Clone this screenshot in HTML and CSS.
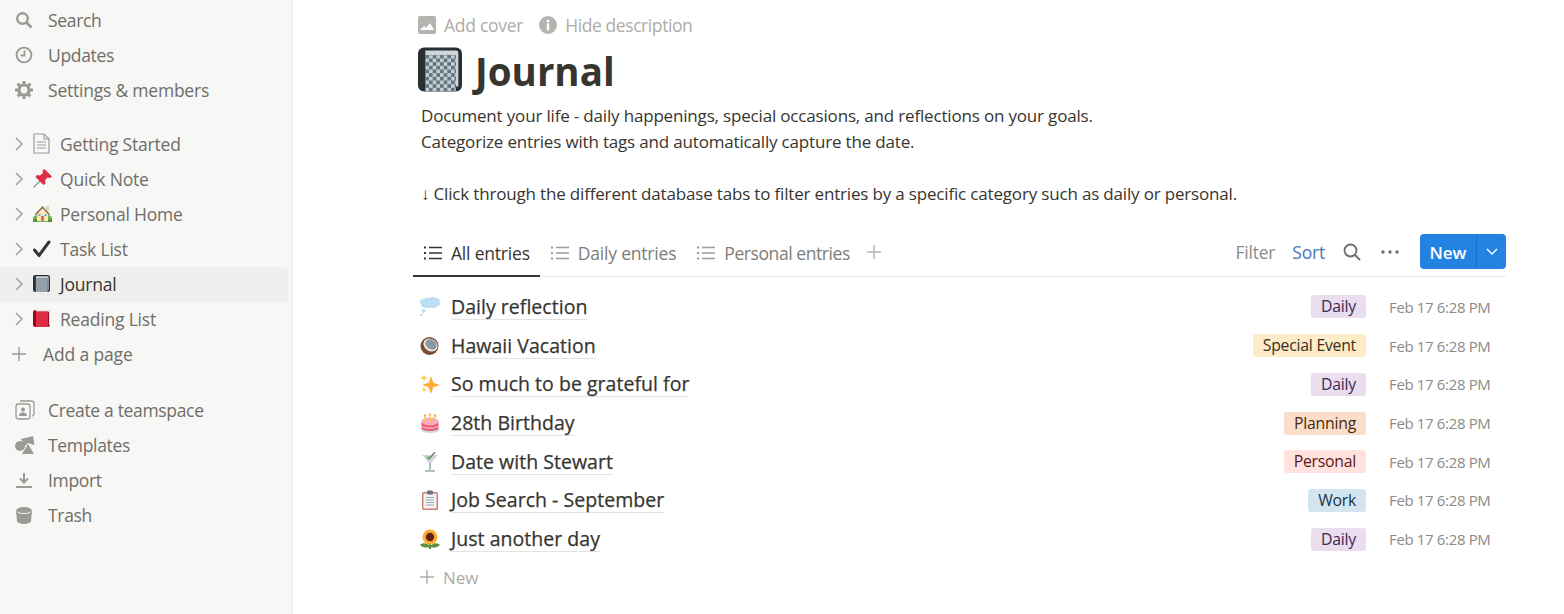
FILE: index.html
```html
<!DOCTYPE html>
<html lang="en">
<head>
<meta charset="utf-8">
<title>Journal</title>
<link rel="stylesheet" href="styles.css">
</head>
<body>
<svg class="defs" width="0" height="0" aria-hidden="true">
  <defs>
    <pattern id="chk" width="6" height="6" patternUnits="userSpaceOnUse">
      <rect width="6" height="6" fill="#c3ccd2"/>
      <rect width="3" height="3" fill="#66757f"/>
      <rect x="3" y="3" width="3" height="3" fill="#66757f"/>
    </pattern>
    <symbol id="chev" viewBox="0 0 10 16"><path d="M2 2l6 6-6 6" fill="none" stroke="#a5a4a0" stroke-width="1.6"/></symbol>
    <symbol id="plus" viewBox="0 0 16 16"><path d="M8 1v14M1 8h14" fill="none" stroke="currentColor" stroke-width="1.4"/></symbol>
    <symbol id="list" viewBox="0 0 18 14"><path d="M5 1.5h13M5 7h13M5 12.5h13" stroke="currentColor" stroke-width="1.5" fill="none"/><path d="M0 .5h2v2H0zM0 6h2v2H0zM0 11.5h2v2H0z" fill="currentColor"/></symbol>
    <symbol id="book" viewBox="0 0 36 36">
      <path d="M5 0h26a5 5 0 0 1 5 5v26a5 5 0 0 1-5 5H5a5 5 0 0 1-5-5V5a5 5 0 0 1 5-5z" fill="#292f33"/>
      <path d="M6 2.500h25a2 2 0 0 1 2 2V32h-2V6.500H6z" fill="#ccd6dd"/>
      <rect x="6" y="6.500" width="25" height="29.500" fill="url(#chk)"/>
    </symbol>
  </defs>
</svg>
<div class="app">
  <aside class="sidebar">
    <nav class="group">
      <a class="row"><span class="ico"><svg width="18" height="18" viewBox="0 0 18 18"><circle cx="7.500" cy="7.500" r="5.300" fill="none" stroke="#9b9a97" stroke-width="2.400"/><path d="M11.500 11.500l5 5" stroke="#9b9a97" stroke-width="2.800"/></svg></span>Search</a>
      <a class="row"><span class="ico"><svg width="18" height="18" viewBox="0 0 18 18"><circle cx="9" cy="9" r="7.400" fill="none" stroke="#9b9a97" stroke-width="1.900"/><path d="M9.500 4.500v5H5.500" fill="none" stroke="#9b9a97" stroke-width="1.800"/></svg></span>Updates</a>
      <a class="row"><span class="ico"><svg width="18" height="18" viewBox="0 0 18 18"><circle cx="9" cy="9" r="5" fill="none" stroke="#9b9a97" stroke-width="3.200"/><path d="M9 0v18M0 9h18M2.600 2.600l12.800 12.800M15.400 2.600L2.600 15.400" stroke="#9b9a97" stroke-width="3" stroke-dasharray="3 12 3"/></svg></span><span class="wide">Settings &amp; members</span></a>
    </nav>
    <nav class="group pages">
      <a class="row page"><svg class="chev"><use href="#chev"/></svg><span class="pico"><svg width="17" height="21" viewBox="0 0 17 21"><path d="M1 1h10l5 5v14H1z" fill="none" stroke="#9b9a97" stroke-width="1.200"/><path d="M11 1v5h5M4 9h9M4 12h9M4 15h9" fill="none" stroke="#9b9a97" stroke-width="1.100"/></svg></span>Getting Started</a>
      <a class="row page"><svg class="chev"><use href="#chev"/></svg><span class="pico"><svg width="19" height="19" viewBox="0 0 19 19"><path d="M0.500 18.500l6.500-6.500" stroke="#8899a6" stroke-width="1.300"/><path d="M11.500 0l7.500 7.500-2 1.500-2.500-.5-2.500 3 .5 3-2 1.500-8-8 1.500-2 3 .5 3-2.500-.5-2.500z" fill="#dd2e44"/></svg></span>Quick Note</a>
      <a class="row page"><svg class="chev"><use href="#chev"/></svg><span class="pico"><svg width="19" height="19" viewBox="0 0 19 19"><path d="M0 14a4 4 0 0 1 5-3h9a4 4 0 0 1 5 3v4H0z" fill="#77b255"/><rect x="4" y="8" width="11" height="9" fill="#ffe8b6"/><path d="M2 10l7.500-8 7.500 8-1.200 1-6.300-6.500-6.300 6.500z" fill="#a0674b"/><path d="M11 5l3-3h2l0 5z" fill="#c6e5b3"/><rect x="8.200" y="12" width="2.600" height="5" fill="#c1694f"/><rect x="5.500" y="10" width="2" height="2" fill="#55acee"/><rect x="11.500" y="10" width="2" height="2" fill="#55acee"/><path d="M0 15h4v3H0zM15 15h4v3h-4z" fill="#5c913b"/></svg></span>Personal Home</a>
      <a class="row page"><svg class="chev"><use href="#chev"/></svg><span class="pico"><svg width="18" height="18" viewBox="0 0 18 18"><path d="M1.500 10l4.500 5.500L16 2" fill="none" stroke="#31373d" stroke-width="3" stroke-linecap="round" stroke-linejoin="round"/></svg></span>Task List</a>
      <a class="row page active"><svg class="chev"><use href="#chev"/></svg><span class="pico"><svg width="17" height="17"><use href="#book"/></svg></span>Journal</a>
      <a class="row page"><svg class="chev"><use href="#chev"/></svg><span class="pico"><svg width="17" height="17" viewBox="0 0 17 17"><rect width="17" height="17" rx="2.500" fill="#a0041e"/><path d="M3 0h12a2 2 0 0 1 2 2v13h-1V3a1.500 1.500 0 0 0-1.500-1.500H3z" fill="#ffd7dc"/><path d="M3 2h11a1 1 0 0 1 1 1v14H3z" fill="#dd2e44"/></svg></span>Reading List</a>
      <a class="row add"><svg class="addico"><use href="#plus"/></svg>Add a page</a>
    </nav>
    <nav class="group tools">
      <a class="row"><span class="ico"><svg width="20" height="20" viewBox="0 0 20 20"><rect x="1" y="4" width="14" height="15" rx="2.500" fill="none" stroke="#9b9a97" stroke-width="1.300"/><path d="M5 1h11.500A2.500 2.500 0 0 1 19 3.500V14a2.500 2.500 0 0 1-2 2" fill="none" stroke="#9b9a97" stroke-width="1.300"/><circle cx="8" cy="9.500" r="2" fill="#9b9a97"/><path d="M4 16c0-5 8-5 8 0z" fill="#9b9a97"/></svg></span>Create a teamspace</a>
      <a class="row"><span class="ico"><svg width="20" height="18" viewBox="0 0 20 18"><circle cx="5" cy="10" r="5" fill="#9b9a97"/><path d="M6 3l12-3 1.500 9-6.500-2-3 3z" fill="#9b9a97"/><path d="M13 8l6 10H7z" fill="#9b9a97"/></svg></span>Templates</a>
      <a class="row"><span class="ico"><svg width="18" height="18" viewBox="0 0 18 18"><path d="M9 2v9M5 7.500l4 4 4-4" fill="none" stroke="#9b9a97" stroke-width="2"/><path d="M1 16h16" stroke="#9b9a97" stroke-width="2"/></svg></span>Import</a>
      <a class="row"><span class="ico"><svg width="18" height="18" viewBox="0 0 18 18"><path d="M1 5a8 4 0 0 1 16 0l-1 10a7 3 0 0 1-14 0z" fill="#9b9a97"/><path d="M2.500 5.500a6.500 2 0 0 0 13 0" fill="none" stroke="#f7f7f5" stroke-width="1"/></svg></span>Trash</a>
    </nav>
  </aside>
  <main class="main">
    <div class="head">
      <div class="actions">
        <span class="action"><svg width="18" height="18" viewBox="0 0 18 18"><path d="M2 0h14a2 2 0 0 1 2 2v14a2 2 0 0 1-2 2H2a2 2 0 0 1-2-2V2a2 2 0 0 1 2-2z" fill="#b5b4b1"/><path d="M2 14l4-4 2 2 4-5 4 7z" fill="#fff"/></svg>Add cover</span>
        <span class="action tight"><svg width="18" height="18" viewBox="0 0 18 18"><circle cx="9" cy="9" r="9" fill="#b5b4b1"/><rect x="7.800" y="7.500" width="2.400" height="7" fill="#fff"/><circle cx="9" cy="5" r="1.500" fill="#fff"/></svg>Hide description</span>
      </div>
      <h1 class="title"><svg width="44" height="45"><use href="#book"/></svg>Journal</h1>
      <div class="desc">
        <p>Document your life - daily happenings, special occasions, and reflections on your goals.</p>
        <p>Categorize entries with tags and automatically capture the date.</p>
        <p>&nbsp;</p>
        <p>↓ Click through the different database tabs to filter entries by a specific category such as daily or personal.</p>
      </div>
    </div>
    <div class="toolbar">
      <div class="tabs">
        <a class="tab on"><svg width="18" height="14"><use href="#list"/></svg>All entries</a>
        <a class="tab"><svg width="18" height="14"><use href="#list"/></svg>Daily entries</a>
        <a class="tab tight"><svg width="18" height="14"><use href="#list"/></svg>Personal entries</a>
        <svg class="tabadd" width="16" height="16"><use href="#plus"/></svg>
      </div>
      <div class="tools-right">
        <span class="tool">Filter</span>
        <span class="tool blue">Sort</span>
        <svg class="searchico" width="18" height="18" viewBox="0 0 18 18"><circle cx="7.500" cy="7.500" r="6" fill="none" stroke="#6f6e69" stroke-width="1.800"/><path d="M12 12l5 5" stroke="#6f6e69" stroke-width="2"/></svg>
        <svg class="dots" width="18" height="4" viewBox="0 0 18 4"><circle cx="2" cy="2" r="1.700" fill="#6f6e69"/><circle cx="9" cy="2" r="1.700" fill="#6f6e69"/><circle cx="16" cy="2" r="1.700" fill="#6f6e69"/></svg>
        <div class="newbtn"><span class="newlabel">New</span><span class="newarrow"><svg width="12" height="7" viewBox="0 0 12 7"><path d="M1 1l5 5 5-5" fill="none" stroke="#fff" stroke-width="1.400"/></svg></span></div>
      </div>
    </div>
    <ul class="entries">
      <li class="entry"><svg class="emoji" viewBox="0 0 20 20"><path d="M4 2.500a4 2.500 0 0 1 6-1.500 4 2.500 0 0 1 6 0 3 3 0 0 1 3.500 4 3 3 0 0 1-2.500 4.500 4 2.500 0 0 1-6 1 5 2.500 0 0 1-6 0 4 3 0 0 1-4-3.500 3 3 0 0 1 3-5z" fill="#bbddf5"/><circle cx="3.500" cy="14" r="2" fill="#bbddf5"/><circle cx="1.500" cy="18" r="1.200" fill="#bbddf5"/></svg><span class="name">Daily reflection</span><span class="tag purple">Daily</span><span class="date">Feb 17 6:28 PM</span></li>
      <li class="entry"><svg class="emoji" viewBox="0 0 20 20"><circle cx="9.500" cy="10" r="9" fill="#7c4a2d"/><ellipse cx="10.500" cy="9" rx="7.500" ry="6" transform="rotate(35 10.500 9)" fill="#e8eaec"/><ellipse cx="11" cy="8.500" rx="6" ry="4.700" transform="rotate(35 11 8.500)" fill="#8899a6"/></svg><span class="name">Hawaii Vacation</span><span class="tag yellow">Special Event</span><span class="date">Feb 17 6:28 PM</span></li>
      <li class="entry"><svg class="emoji" viewBox="0 0 20 20"><path d="M11 2l2.300 6.700L20 11l-6.700 2.300L11 20l-2.300-6.700L2 11l6.700-2.300z" fill="#ffac33"/><path d="M4 0l1 2.800L7.800 4 5 5 4 8 3 5 .2 4 3 2.800z" fill="#ffcc4d"/><path d="M4 13l.8 2 2 .8-2 .8L4 19l-.8-2.400-2-.8 2-.8z" fill="#ffcc4d"/></svg><span class="name">So much to be grateful for</span><span class="tag purple">Daily</span><span class="date">Feb 17 6:28 PM</span></li>
      <li class="entry"><svg class="emoji" viewBox="0 0 20 20"><ellipse cx="10" cy="16.500" rx="9.500" ry="3.500" fill="#ccd6dd"/><path d="M1.500 9h17v6a8.500 3 0 0 1-17 0z" fill="#ea596e"/><path d="M1.500 11.500a8.500 3 0 0 0 17 0v1.500a8.500 3 0 0 1-17 0z" fill="#f4abba"/><ellipse cx="10" cy="8.500" rx="8.500" ry="4" fill="#f4abba"/><path d="M5 3.500v5M10 2.500v6M15 3.500v5" stroke="#ffcc4d" stroke-width="1.500"/><path d="M5 .5l1.200 3H3.800zM10 0l1.200 2.500H8.800zM15 .5l1.200 3h-2.400z" fill="#f4900c"/></svg><span class="name">28th Birthday</span><span class="tag orange">Planning</span><span class="date">Feb 17 6:28 PM</span></li>
      <li class="entry"><svg class="emoji" viewBox="0 0 20 20"><path d="M2 3h16l-8 9z" fill="#ccd6dd"/><path d="M10 11v7" stroke="#99aab5" stroke-width="1.500"/><path d="M5 19h10" stroke="#99aab5" stroke-width="1.500"/><path d="M9 7l6-7" stroke="#66757f" stroke-width="1.300"/><circle cx="8.500" cy="6" r="1.800" fill="#77b255"/></svg><span class="name">Date with Stewart</span><span class="tag red">Personal</span><span class="date">Feb 17 6:28 PM</span></li>
      <li class="entry"><svg class="emoji" viewBox="0 0 20 20"><rect x="2" y="2" width="16" height="18" rx="1.500" fill="#d0806a"/><rect x="3.500" y="3.500" width="13" height="15" fill="#f1f3f4"/><rect x="7" y="0.500" width="6" height="4" rx="1" fill="#66757f"/><path d="M6 7.500h8M6 10h8M6 12.500h8M6 15h8" stroke="#99aab5" stroke-width="1.100"/></svg><span class="name">Job Search - September</span><span class="tag blue-tag">Work</span><span class="date">Feb 17 6:28 PM</span></li>
      <li class="entry"><svg class="emoji" viewBox="0 0 20 20"><path d="M0 16c3-3 7-2 10 1 3-3 7-4 10-1-3 3-7 3-10 2-3 1-7 1-10-2z" fill="#5c913b"/><path d="M9 14h2v6H9z" fill="#5c913b"/><circle cx="10" cy="8" r="7.500" fill="#ffac33"/><circle cx="10" cy="8" r="4.200" fill="#662113"/></svg><span class="name">Just another day</span><span class="tag purple">Daily</span><span class="date">Feb 17 6:28 PM</span></li>
    </ul>
    <div class="newrow"><svg width="16" height="16"><use href="#plus"/></svg>New</div>
  </main>
</div>
</body>
</html>
```

FILE: styles.css
```css
* { box-sizing: border-box; }
html, body { margin: 0; height: 100%; overflow: hidden; }
body { font-family: "Open Sans", "Noto Sans", sans-serif; color: #37352f; background: #fff; }
.defs { position: absolute; }
.app { display: flex; height: 614px; }

.sidebar { width: 293px; flex: none; background: #f7f7f5; border-right: 1px solid #efefed; padding: 3px 4px 0 0; font-size: 17.5px; color: #6f6e69; }
.group { display: flex; flex-direction: column; }
.pages { margin-top: 19px; }
.tools { margin-top: 21px; }
.row { display: flex; align-items: center; height: 35px; padding: 0 0 2px 15px; border-radius: 0 4px 4px 0; white-space: nowrap; letter-spacing: -0.33px; }
.wide { letter-spacing: -0.22px; }
.ico { width: 33px; flex: none; display: flex; align-items: center; }
.page { padding-left: 14px; letter-spacing: -0.2px; }
.chev { width: 10px; height: 16px; margin-right: 9px; flex: none; }
.pico { width: 27px; flex: none; display: flex; align-items: center; }
.active { background: #efefed; color: #37352f; }
.add { padding-left: 11px; letter-spacing: -0.15px; }
.addico { width: 16px; height: 16px; margin-right: 16px; color: #9b9a97; }

.main { flex: 1; padding: 0 58px 0 120px; }
.head { padding-left: 5px; }
.actions { display: flex; gap: 16px; height: 49px; padding-top: 13px; font-size: 17.5px; color: #aeaca8; }
.action { display: flex; align-items: center; gap: 8px; height: 24px; white-space: nowrap; letter-spacing: -0.27px; }
.title { display: flex; align-items: center; gap: 13px; margin: 0; height: 44px; font-size: 38.5px; font-weight: 700; line-height: 44px; color: #37352f; }
.title svg { margin-bottom: 4px; }
.desc { padding: 10px 0 0 3px; font-size: 17px; line-height: 26px; color: #37352f; letter-spacing: -0.175px; }
.desc p { margin: 0; white-space: nowrap; }

.toolbar { display: flex; justify-content: space-between; align-items: stretch; height: 44px; margin-top: 26px; border-bottom: 1px solid #e9e9e7; }
.tabs { display: flex; align-items: stretch; }
.tab { display: flex; align-items: center; gap: 9px; padding: 0 10px 3px 11px; font-size: 17.5px; color: #7d7c78; letter-spacing: -0.2px; white-space: nowrap; margin-bottom: -1px; border-bottom: 2px solid transparent; }
.tight { letter-spacing: -0.42px; }
.tab svg { color: #9b9a97; }
.on { color: #37352f; border-bottom-color: #37352f; }
.on svg { color: #37352f; }
.tabadd { color: #b5b4b1; align-self: center; margin: 0 0 6px 6px; }
.tools-right { display: flex; align-items: center; padding-bottom: 6px; }
.tool { font-size: 17.5px; color: #8c8b87; letter-spacing: -0.2px; margin-right: 17px; }
.tool.blue { color: #4b76b8; margin-right: 18px; }
.searchico { margin-right: 20px; }
.dots { margin-right: 21px; }
.newbtn { display: flex; width: 86px; height: 35px; background: #2383e2; border-radius: 4px; color: #fff; font-size: 17px; font-weight: 600; }
.newlabel { flex: 1; text-align: center; line-height: 37px; }
.newarrow { width: 30px; display: flex; align-items: center; justify-content: center; border-left: 1px solid #1b6fc2; }

.entries { list-style: none; margin: 10.6px 0 0; padding: 0; }
.entry { display: flex; align-items: center; height: 38.7px; padding: 0 16px 0 7px; }
.emoji { width: 20px; height: 20px; flex: none; margin-right: 11px; }
.name { font-size: 19.5px; font-weight: 500; -webkit-text-stroke: 0.25px #37352f; line-height: 25px; border-bottom: 1px solid #e3e3e1; margin-right: auto; white-space: nowrap; letter-spacing: 0.03px; }
.tag { font-size: 15.8px; line-height: 23px; padding: 0 10px; border-radius: 3px; letter-spacing: -0.25px; white-space: nowrap; }
.purple { background: #e8deee; color: #412454; }
.yellow { background: #fdecc8; color: #402c1b; }
.orange { background: #fadec9; color: #49290e; }
.red { background: #ffe2dd; color: #5d1715; }
.blue-tag { background: #d3e5ef; color: #183347; }
.date { width: 101px; margin-left: 23px; font-size: 15px; color: #8c8b87; white-space: nowrap; letter-spacing: -0.35px; }
.newrow { display: flex; align-items: center; gap: 8px; height: 38px; padding-left: 6px; font-size: 17px; color: #aeaca8; }
.newrow svg { color: #aeaca8; }
```
